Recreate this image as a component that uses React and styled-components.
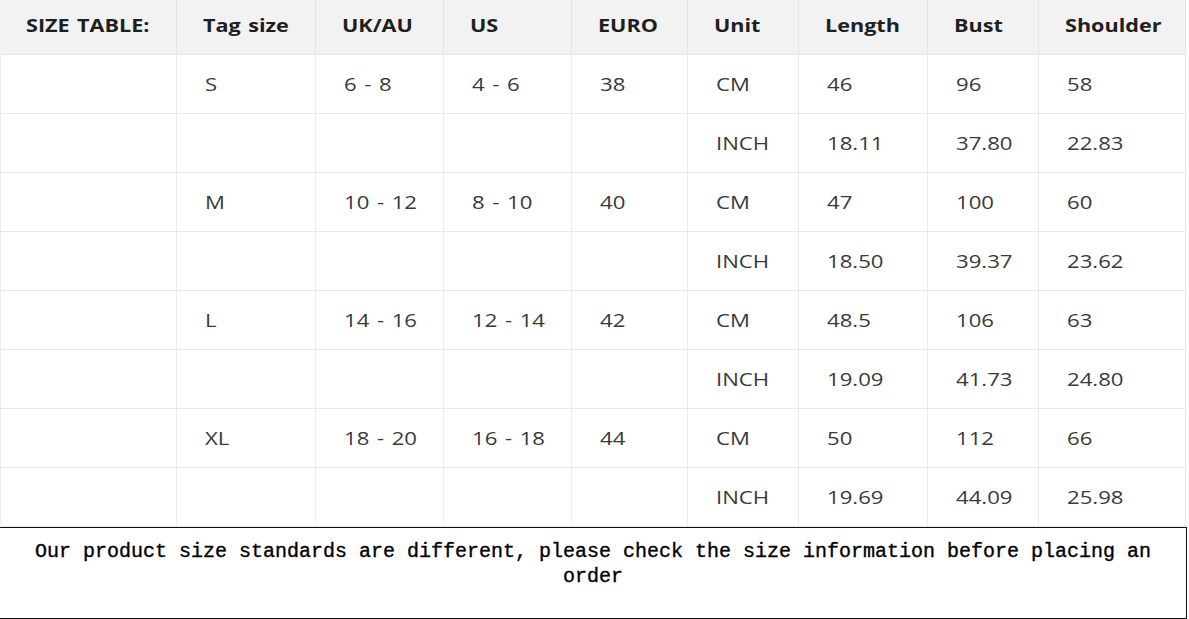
import React from "react";
import styled, { createGlobalStyle } from "styled-components";

const Global = createGlobalStyle`
  html, body { margin: 0; padding: 0; background: #fff; }
  body { width: 1189px; height: 619px; overflow: hidden; }
`;

const Page = styled.div`
  width: 1189px;
  display: flex;
  flex-direction: column;
`;

const Table = styled.table`
  width: 1186px;
  border-collapse: separate;
  border-spacing: 0;
  table-layout: fixed;
  font-family: "Open Sans", "Liberation Sans", sans-serif;
  font-size: 18px;
`;

const Th = styled.th`
  height: 55px;
  background: #f2f2f2;
  color: #1f1f1f;
  font-weight: 700;
  text-align: left;
  padding: 0 0 5px 26px;
  border-right: 1px solid #e4e4e4;
  border-bottom: 1px solid #e4e4e4;
  box-sizing: border-box;
  white-space: nowrap;
`;

const Td = styled.td`
  height: 59px;
  color: #3a3a3a;
  text-align: left;
  padding: 0 0 0 28px;
  border-right: 1px solid #ececec;
  border-bottom: 1px solid #e8e8e8;
  box-sizing: border-box;
  white-space: nowrap;
  &:first-child { border-left: 1px solid #eeeeee; }
  tr:last-child > &:first-child { border-bottom-left-radius: 6px; }
`;

const Label = styled.span`
  display: inline-block;
  transform: scaleX(${(p) => (p.$head ? 1.2 : 1.23)});
  transform-origin: left center;
  word-spacing: 1.5px;
`;

const Note = styled.div`
  box-sizing: border-box;
  width: 1187px;
  height: 92px;
  border-top: 1px solid #111;
  border-right: 1px solid #111;
  border-bottom: 1px solid #111;
  padding: 11px 30px 0;
  font-family: "Liberation Mono", "DejaVu Sans Mono", monospace;
  font-size: 20px;
  line-height: 25px;
  font-weight: 400;
  color: #000;
  text-align: center;
  -webkit-text-stroke: 0.35px #000;
`;

const widths = [177, 139, 128, 128, 116, 111, 129, 111, 147];
const headers = ["SIZE TABLE:", "Tag size", "UK/AU", "US", "EURO", "Unit", "Length", "Bust", "Shoulder"];
const sizes = [
  { tag: "S", uk: "6 - 8", us: "4 - 6", eu: "38", cm: ["46", "96", "58"], inch: ["18.11", "37.80", "22.83"] },
  { tag: "M", uk: "10 - 12", us: "8 - 10", eu: "40", cm: ["47", "100", "60"], inch: ["18.50", "39.37", "23.62"] },
  { tag: "L", uk: "14 - 16", us: "12 - 14", eu: "42", cm: ["48.5", "106", "63"], inch: ["19.09", "41.73", "24.80"] },
  { tag: "XL", uk: "18 - 20", us: "16 - 18", eu: "44", cm: ["50", "112", "66"], inch: ["19.69", "44.09", "25.98"] },
];

const Cell = ({ children }) => <Td>{children ? <Label>{children}</Label> : null}</Td>;

export default function App() {
  return (
    <Page>
      <Global />
      <Table>
        <colgroup>
          {widths.map((w, i) => (
            <col key={i} style={{ width: w }} />
          ))}
        </colgroup>
        <thead>
          <tr>
            {headers.map((h) => (
              <Th key={h}>
                <Label $head>{h}</Label>
              </Th>
            ))}
          </tr>
        </thead>
        <tbody>
          {sizes.map((s) => (
            <React.Fragment key={s.tag}>
              <tr>
                <Cell />
                <Cell>{s.tag}</Cell>
                <Cell>{s.uk}</Cell>
                <Cell>{s.us}</Cell>
                <Cell>{s.eu}</Cell>
                <Cell>CM</Cell>
                {s.cm.map((v, i) => (
                  <Cell key={i}>{v}</Cell>
                ))}
              </tr>
              <tr>
                <Cell />
                <Cell />
                <Cell />
                <Cell />
                <Cell />
                <Cell>INCH</Cell>
                {s.inch.map((v, i) => (
                  <Cell key={i}>{v}</Cell>
                ))}
              </tr>
            </React.Fragment>
          ))}
        </tbody>
      </Table>
      <Note>
        Our product size standards are different, please check the size information before placing an order
      </Note>
    </Page>
  );
}
